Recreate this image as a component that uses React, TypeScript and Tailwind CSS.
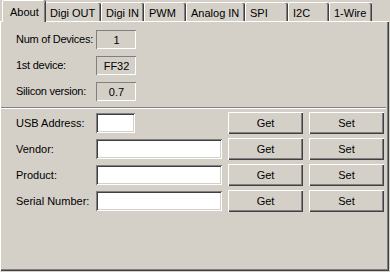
import React from 'react';

// Tabs - label and width in pixels
const tabs = [
    { label: 'About', width: 'w-[43px]' },
    { label: 'Digi OUT', width: 'w-[56px]' },
    { label: 'Digi IN', width: 'w-[43px]' },
    { label: 'PWM', width: 'w-[42px]' },
    { label: 'Analog IN', width: 'w-[59px]' },
    { label: 'SPI', width: 'w-[43px]' },
    { label: 'I2C', width: 'w-[41px]' },
    { label: '1-Wire', width: 'w-[43px]' },
];

const infoRows = [
    { label: 'Num of Devices:', value: '1' },
    { label: '1st device:', value: 'FF32' },
    { label: 'Silicon version:', value: '0.7' },
];

const editRows = [
    { label: 'USB Address:', inputWidth: 'w-[39px]' },
    { label: 'Vendor:', inputWidth: 'w-[126px]' },
    { label: 'Product:', inputWidth: 'w-[126px]' },
    { label: 'Serial Number:', inputWidth: 'w-[126px]' },
];

// Component - ClassicButton
function ClassicButton(properties: { children: React.ReactNode }) {
    return (
        <button className="flex h-[22px] w-[75px] items-center justify-center bg-[#d4d0c8] text-[11px] text-black shadow-[inset_1px_1px_#ffffff,inset_-1px_-1px_#404040,inset_-2px_-2px_#808080]">
            {properties.children}
        </button>
    );
}

// Component - App
export default function App() {
    return (
        <div className="h-[272px] w-[390px] overflow-hidden bg-[#d4d0c8] font-['Liberation_Sans',Arial,sans-serif] text-[11px] text-black">
            {/* Tab strip */}
            <div className="flex h-[21px] items-end pl-[2px]">
                {tabs.map(function (tab, index) {
                    const selected = index == 0;
                    return (
                        <div
                            key={tab.label}
                            className={
                                selected
                                    ? 'relative z-10 -mb-px flex h-[22px] w-[43px] items-start whitespace-nowrap rounded-t-[2px] border-l border-t border-white bg-[#d4d0c8] pl-[7px] pt-[3px] shadow-[inset_-1px_0_#808080,1px_0_#404040]'
                                    : 'flex h-[19px] items-start whitespace-nowrap rounded-t-[2px] border-l border-t border-white bg-[#d4d0c8] pl-[4px] pt-[2px] shadow-[inset_-1px_0_#404040,inset_-2px_0_#808080] ' + tab.width
                            }
                        >
                            {tab.label}
                        </div>
                    );
                })}
            </div>

            {/* Panel */}
            <div className="flex h-[250px] w-[389px] flex-col border-l border-t border-white shadow-[inset_-1px_-1px_#404040,inset_-2px_-2px_#808080]">
                {/* Device info */}
                <div className="mt-[8px] flex flex-col gap-[7px] pl-[15px]">
                    {infoRows.map(function (row) {
                        return (
                            <div key={row.label} className="flex h-[19px] items-center">
                                <span className="w-[80px] whitespace-nowrap tracking-[-0.25px]">{row.label}</span>
                                <div className="flex h-[19px] w-[40px] items-center justify-center border-l border-t border-[#808080] shadow-[inset_-1px_-1px_#ffffff]">
                                    {row.value}
                                </div>
                            </div>
                        );
                    })}
                </div>

                {/* Separator */}
                <div className="mt-[6px] w-[385px] border-b border-t border-b-white border-t-[#808080]" />

                {/* Editable fields */}
                <div className="mt-[3px] flex flex-col gap-[4px] pl-[15px]">
                    {editRows.map(function (row) {
                        return (
                            <div key={row.label} className="flex h-[22px] items-center">
                                <span className="w-[80px] whitespace-nowrap">{row.label}</span>
                                <div className="w-[132px]">
                                    <div className={'h-[20px] bg-white shadow-[inset_1px_1px_#808080,inset_-1px_-1px_#ffffff,inset_2px_2px_#404040,inset_-2px_-2px_#d4d0c8] ' + row.inputWidth} />
                                </div>
                                <ClassicButton>Get</ClassicButton>
                                <div className="w-[6px]" />
                                <ClassicButton>Set</ClassicButton>
                            </div>
                        );
                    })}
                </div>
            </div>
        </div>
    );
}
